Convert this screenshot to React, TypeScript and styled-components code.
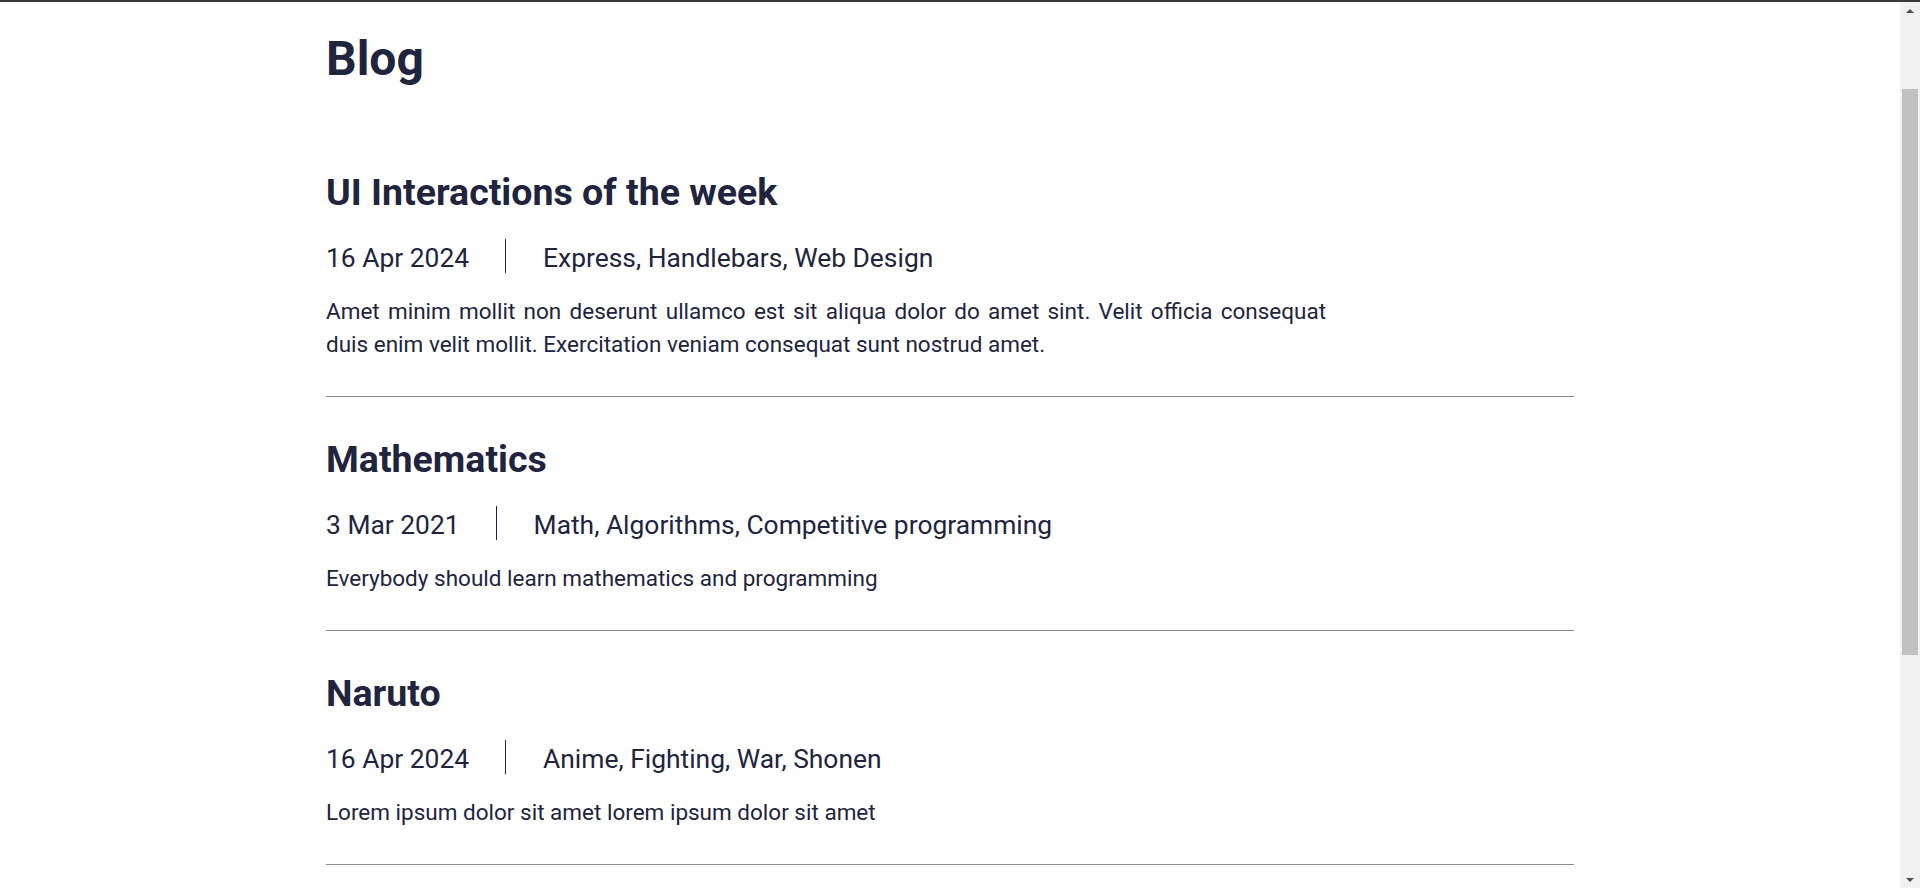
import React from "react";
import styled, { createGlobalStyle } from "styled-components";

const GlobalStyle = createGlobalStyle`
  html, body {
    margin: 0;
    padding: 0;
    background: #ffffff;
    overflow: hidden;
  }
  body {
    font-family: Roboto, "Liberation Sans", sans-serif;
    color: #21243d;
  }
  * { box-sizing: border-box; }
`;

const Shell = styled.div`
  display: flex;
  height: 888px;
  border-top: 2px solid #3a3a3a;
  overflow: hidden;
`;

const Main = styled.main`
  flex: 1;
  min-width: 0;
  overflow: hidden;
`;

const Container = styled.div`
  width: 1248px;
  margin: 0 auto;
`;

const PageTitle = styled.h1`
  margin: 0 0 43px;
  padding-top: 29px;
  font-size: 48px;
  line-height: 56px;
  font-weight: 700;
  color: #21243d;
`;

const PostList = styled.ul`
  list-style: none;
  margin: 0;
  padding: 0;
`;

const PostItem = styled.li`
  padding: 40px 0 35px;
  border-bottom: 1px solid #8c8c8c;
`;

const PostTitle = styled.h2`
  margin: 0 0 25px;
  font-size: 37.5px;
  line-height: 44px;
  font-weight: 700;
  color: #21243d;
`;

const Meta = styled.div`
  display: flex;
  align-items: flex-start;
  font-size: 26.4px;
  line-height: 38px;
  font-weight: 400;
  color: #21243d;
`;

const MetaDivider = styled.span`
  width: 1px;
  height: 34px;
  background: #21243d;
  margin: 0 37px 0 36px;
`;

const Excerpt = styled.p`
  margin: 18px 0 0;
  max-width: 1000px;
  font-size: 22.5px;
  line-height: 33px;
  text-align: justify;
  color: #21243d;
`;

const Scrollbar = styled.div`
  width: 20px;
  flex: none;
  display: flex;
  flex-direction: column;
  background: #f1f1f1;
`;

const ScrollArrow = styled.div<{ $down?: boolean }>`
  height: 17px;
  display: flex;
  align-items: center;
  justify-content: center;
  &::before {
    content: "";
    width: 0;
    height: 0;
    border-left: 4px solid transparent;
    border-right: 4px solid transparent;
    ${(p) =>
      p.$down
        ? "border-top: 4px solid #505050;"
        : "border-bottom: 4px solid #505050;"}
  }
`;

const Track = styled.div`
  flex: 1;
  padding: 70px 2px 0;
`;

const Thumb = styled.div`
  height: 566px;
  background: #c1c1c1;
`;

type Post = {
  title: string;
  date: string;
  tags: string;
  excerpt: string;
};

const posts: Post[] = [
  {
    title: "UI Interactions of the week",
    date: "16 Apr 2024",
    tags: "Express, Handlebars, Web Design",
    excerpt:
      "Amet minim mollit non deserunt ullamco est sit aliqua dolor do amet sint. Velit officia consequat duis enim velit mollit. Exercitation veniam consequat sunt nostrud amet.",
  },
  {
    title: "Mathematics",
    date: "3 Mar 2021",
    tags: "Math, Algorithms, Competitive programming",
    excerpt: "Everybody should learn mathematics and programming",
  },
  {
    title: "Naruto",
    date: "16 Apr 2024",
    tags: "Anime, Fighting, War, Shonen",
    excerpt: "Lorem ipsum dolor sit amet lorem ipsum dolor sit amet",
  },
];

export default function App() {
  return (
    <>
      <GlobalStyle />
      <Shell>
        <Main>
          <Container>
            <PageTitle>Blog</PageTitle>
            <PostList>
              {posts.map((post) => (
                <PostItem key={post.title}>
                  <PostTitle>{post.title}</PostTitle>
                  <Meta>
                    <span>{post.date}</span>
                    <MetaDivider />
                    <span>{post.tags}</span>
                  </Meta>
                  <Excerpt>{post.excerpt}</Excerpt>
                </PostItem>
              ))}
            </PostList>
          </Container>
        </Main>
        <Scrollbar>
          <ScrollArrow />
          <Track>
            <Thumb />
          </Track>
          <ScrollArrow $down />
        </Scrollbar>
      </Shell>
    </>
  );
}
